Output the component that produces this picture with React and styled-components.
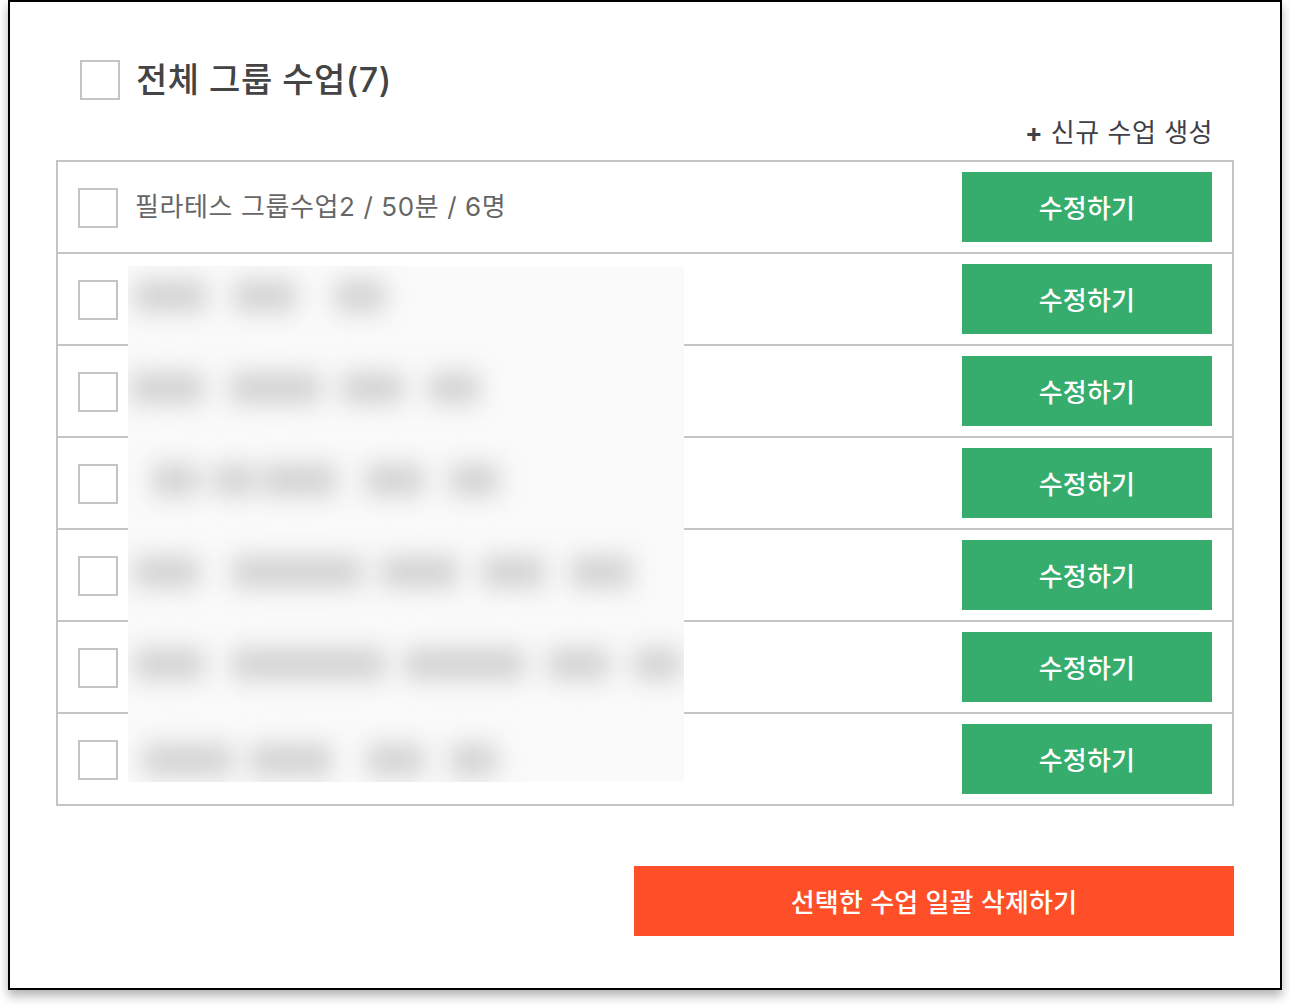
import React from "react";
import styled, { createGlobalStyle } from "styled-components";

const GlobalStyle = createGlobalStyle`
  html, body { margin: 0; padding: 0; background: #fff; }
  body { font-family: Inter, "Noto Sans CJK KR", sans-serif; }
  #root { min-height: 1006px; }
`;

const Frame = styled.main`
  position: relative;
  box-sizing: border-box;
  width: 1274px;
  height: 990px;
  margin-left: 8px;
  padding: 58px 46px 0;
  background: #fff;
  border: 2px solid #000;
  box-shadow: 0 6px 10px rgba(0, 0, 0, 0.3);
`;

const Header = styled.header`
  display: flex;
  align-items: center;
  gap: 16px;
  margin-left: 24px;
  height: 40px;
`;

const Title = styled.h1`
  margin: 0;
  font-size: 34px;
  font-weight: 500;
  letter-spacing: 0.5px;
  color: #444;
  line-height: 40px;
`;

const Check = styled.input.attrs({ type: "checkbox" })`
  appearance: none;
  box-sizing: border-box;
  flex: none;
  width: 40px;
  height: 40px;
  margin: 0;
  background: #fff;
  border: 2px solid #c4c4c4;
`;

const RowCheck = styled(Check)`
  margin-top: 2px;
`;

const Toolbar = styled.div`
  display: flex;
  justify-content: flex-end;
  align-items: center;
  height: 60px;
  padding: 5px 21px 0 0;
  box-sizing: border-box;
`;

const NewLink = styled.a`
  font-size: 26px;
  letter-spacing: 0.5px;
  color: #3f3f47;
  line-height: 60px;
`;

const Plus = styled.span`
  font-weight: 700;
`;

const Table = styled.ul`
  list-style: none;
  margin: 0;
  padding: 0;
  border: 2px solid #c4c4c4;
`;

const Row = styled.li`
  display: flex;
  align-items: center;
  gap: 17px;
  box-sizing: border-box;
  height: 92px;
  padding: 0 20px;
  border-bottom: 2px solid #c4c4c4;
  &:last-child {
    height: 90px;
    border-bottom: 0;
  }
`;

const Label = styled.span`
  flex: 1;
  font-size: 26px;
  letter-spacing: 0.6px;
  color: #666;
  position: relative;
  top: -3px;
`;

const EditButton = styled.button`
  flex: none;
  width: 250px;
  height: 70px;
  border: 0;
  padding: 0 0 2px;
  background: #36ad6d;
  color: #fff;
  font: inherit;
  font-size: 26px;
  font-weight: 500;
  letter-spacing: 0.2px;
`;

const Footer = styled.div`
  display: flex;
  justify-content: flex-end;
  margin-top: 60px;
`;

const DeleteButton = styled.button`
  width: 600px;
  height: 70px;
  border: 0;
  padding: 0 0 2px;
  background: #ff4f28;
  color: #fff;
  font: inherit;
  font-size: 26px;
  font-weight: 500;
  letter-spacing: 0.2px;
`;

const Redaction = styled.div`
  position: absolute;
  left: 118px;
  top: 264px;
  width: 556px;
  height: 516px;
  padding-top: 14px;
  box-sizing: border-box;
  background: #fafafa;
  overflow: hidden;
`;

const BlurLine = styled.div`
  display: flex;
  height: 32px;
  margin-bottom: ${(p) => p.$after}px;
  filter: blur(12px);
`;

const Smudge = styled.span`
  flex: none;
  height: 32px;
  width: ${(p) => p.$w}px;
  margin-left: ${(p) => p.$x}px;
  background: #d2d2d2;
`;

const blurred = [
  { after: 60, parts: [[6, 72], [28, 62], [39, 50]] },
  { after: 60, parts: [[2, 74], [26, 91], [21, 61], [26, 50]] },
  { after: 60, parts: [[24, 47], [15, 40], [8, 75], [28, 59], [25, 50]] },
  { after: 60, parts: [[6, 65], [33, 130], [19, 77], [24, 63], [26, 61]] },
  { after: 64, parts: [[6, 70], [28, 153], [19, 121], [23, 61], [24, 48]] },
  { after: 0, parts: [[15, 89], [18, 82], [35, 57], [26, 47]] },
];

const Smudges = () => (
  <Redaction aria-hidden="true">
    {blurred.map((line, i) => (
      <BlurLine key={i} $after={line.after}>
        {line.parts.map(([gap, w], j) => (
          <Smudge key={j} $x={gap} $w={w} />
        ))}
      </BlurLine>
    ))}
  </Redaction>
);

const rows = ["필라테스 그룹수업2 / 50분 / 6명", "", "", "", "", "", ""];

export default function App() {
  return (
    <>
      <GlobalStyle />
      <Frame>
        <Header>
          <Check aria-label="전체 선택" />
          <Title>전체 그룹 수업(7)</Title>
        </Header>
        <Toolbar>
          <NewLink><Plus>+</Plus> 신규 수업 생성</NewLink>
        </Toolbar>
        <Table>
          {rows.map((label, i) => (
            <Row key={i}>
              <RowCheck />
              <Label>{label}</Label>
              <EditButton>수정하기</EditButton>
            </Row>
          ))}
        </Table>
        <Footer>
          <DeleteButton>선택한 수업 일괄 삭제하기</DeleteButton>
        </Footer>
        <Smudges />
      </Frame>
    </>
  );
}
